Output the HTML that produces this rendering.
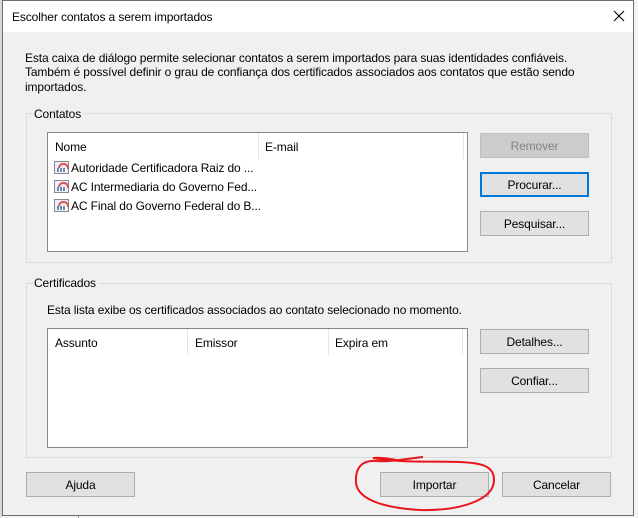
<!DOCTYPE html>
<html><head><meta charset="utf-8"><style>
*{box-sizing:border-box;margin:0;padding:0}
body{width:638px;height:518px;overflow:hidden;background:#f4f4f4;position:relative;font-family:"Liberation Sans",sans-serif;font-size:12px;color:#000;letter-spacing:-0.12px}
.a{position:absolute}
.dlg{left:2px;top:0;width:632px;height:516px;border:1px solid #6e6e6e;background:#f0f0f0}
.tb{left:3px;top:1px;width:630px;height:31px;background:#fff}
.t{position:absolute;white-space:nowrap;line-height:14px}
.grp{position:absolute;border:1px solid #dcdcdc}
.leg{position:absolute;background:#f0f0f0;padding:0 2px;line-height:14px}
.lst{position:absolute;background:#fff;border:1px solid #828790}
.btn{position:absolute;width:109px;height:25px;border:1px solid #adadad;background:#e1e1e1;text-align:center;line-height:24px}
.sep{position:absolute;top:0;width:1px;height:26px;background:#e5e5e5}
.ic{position:absolute;width:15px;height:13px;background:#eef;border:1px solid #8a8a8a}
.ic:before{content:"";position:absolute;left:3px;top:1px;width:7px;height:4px;border:2px solid #d9534f;border-bottom:none;border-radius:5px 5px 0 0}
.ic:after{content:"";position:absolute;left:2px;top:6px;width:9px;height:4px;background:repeating-linear-gradient(90deg,#6a8ab0 0 2px,#fff 2px 3px)}
</style></head><body>
<div class="a" style="left:0;top:0;width:2px;height:518px;background:#d8d8d8"></div>
<div class="a" style="left:78px;top:516px;width:1px;height:2px;background:#999"></div>
<div class="a dlg"></div>
<div class="a tb"></div>
<div class="t" style="left:12px;top:10px">Escolher contatos a serem importados</div>
<svg class="a" style="left:613px;top:10px" width="12" height="12"><path d="M1 1L11 11M11 1L1 11" stroke="#000" stroke-width="1.1"/></svg>
<div class="t" style="left:25px;top:51px">Esta caixa de diálogo permite selecionar contatos a serem importados para suas identidades confiáveis.</div>
<div class="t" style="left:25px;top:65px">Também é possível definir o grau de confiança dos certificados associados aos contatos que estão sendo</div>
<div class="t" style="left:25px;top:80px">importados.</div>

<div class="grp" style="left:26px;top:113px;width:586px;height:150px"></div>
<div class="leg" style="left:32px;top:107px">Contatos</div>
<div class="lst" style="left:47px;top:132px;width:421px;height:120px">
 <div class="sep" style="left:210px"></div><div class="sep" style="left:415px"></div>
 <div class="t" style="left:7px;top:7px">Nome</div><div class="t" style="left:217px;top:7px">E-mail</div>
 <div class="ic" style="left:6px;top:28px"></div><div class="t" style="left:23px;top:28px">Autoridade Certificadora Raiz do ...</div>
 <div class="ic" style="left:6px;top:47px"></div><div class="t" style="left:23px;top:47px">AC Intermediaria do Governo Fed...</div>
 <div class="ic" style="left:6px;top:66px"></div><div class="t" style="left:23px;top:66px">AC Final do Governo Federal do B...</div>
</div>
<div class="btn" style="left:480px;top:133px;background:#cccccc;border-color:#bfbfbf;color:#838383">Remover</div>
<div class="btn" style="left:480px;top:172px;border:2px solid #0078d7;line-height:22px">Procurar...</div>
<div class="btn" style="left:480px;top:211px">Pesquisar...</div>

<div class="grp" style="left:26px;top:283px;width:586px;height:175px"></div>
<div class="leg" style="left:32px;top:276px">Certificados</div>
<div class="t" style="left:47px;top:303px">Esta lista exibe os certificados associados ao contato selecionado no momento.</div>
<div class="lst" style="left:47px;top:328px;width:421px;height:120px">
 <div class="sep" style="left:139px"></div><div class="sep" style="left:280px"></div><div class="sep" style="left:414px"></div>
 <div class="t" style="left:7px;top:7px">Assunto</div><div class="t" style="left:147px;top:7px">Emissor</div><div class="t" style="left:287px;top:7px">Expira em</div>
</div>
<div class="btn" style="left:480px;top:329px">Detalhes...</div>
<div class="btn" style="left:480px;top:368px">Confiar...</div>

<div class="btn" style="left:26px;top:472px">Ajuda</div>
<div class="btn" style="left:380px;top:472px">Importar</div>
<div class="btn" style="left:502px;top:472px">Cancelar</div>
<svg class="a" style="left:0;top:0" width="638" height="518"><path d="M423 457 C405 459 390 462 376 461 C360 460 355 470 356 483 C358 500 385 508 420 510 C460 511 494 500 494 480 C494 465 480 463 460 462 C430 461 400 463 373 458 C380 457 390 459 402 461" fill="none" stroke="#e8161c" stroke-width="2"/></svg>
</body></html>
